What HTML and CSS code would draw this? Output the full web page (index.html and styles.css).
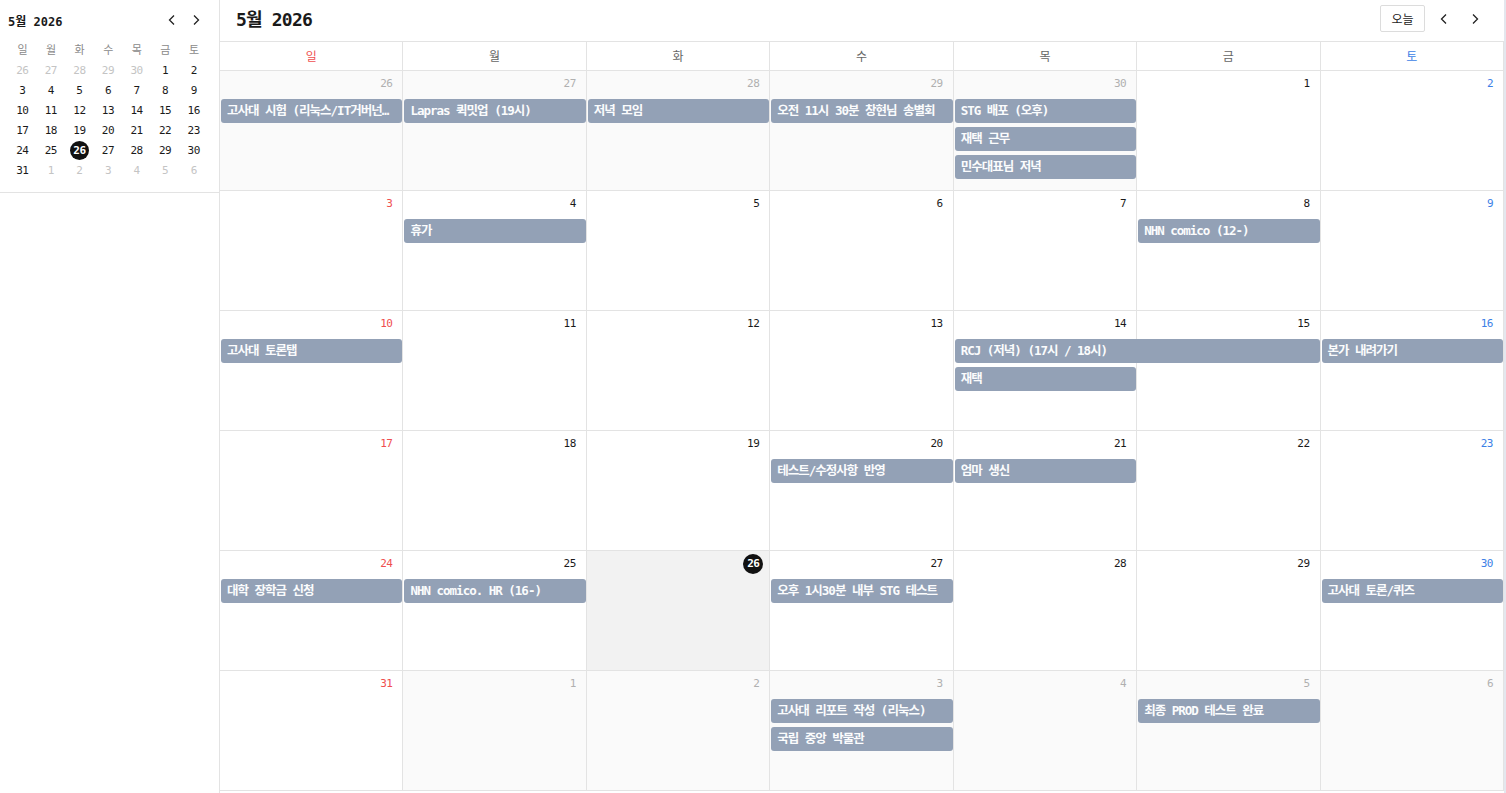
FILE: index.html
```html
<!DOCTYPE html>
<html lang="ko">
<head>
  <meta charset="UTF-8" />
  <meta name="viewport" content="width=device-width, initial-scale=1.0"/>
  <title>캘린더</title>
  <link rel="stylesheet" href="styles.css">
</head>
<body>

<div class="app">

  <!-- 왼쪽: 미니 달력 -->
  <aside class="sidebar">
    <div class="mini">
      <div class="mini-head">
        <span class="mini-title">5월 2026</span>
        <div class="mini-nav">
          <button class="chev"><svg width="8" height="12" viewBox="0 0 8 12"><polyline points="6,1.5 1.5,6 6,10.5"/></svg></button>
          <button class="chev"><svg width="8" height="12" viewBox="0 0 8 12"><polyline points="2,1.5 6.5,6 2,10.5"/></svg></button>
        </div>
      </div>
      <div class="mini-grid">
        <span class="mini-dow">일</span><span class="mini-dow">월</span><span class="mini-dow">화</span><span class="mini-dow">수</span><span class="mini-dow">목</span><span class="mini-dow">금</span><span class="mini-dow">토</span>
        <span class="md out">26</span><span class="md out">27</span><span class="md out">28</span><span class="md out">29</span><span class="md out">30</span><span class="md">1</span><span class="md">2</span>
        <span class="md">3</span><span class="md">4</span><span class="md">5</span><span class="md">6</span><span class="md">7</span><span class="md">8</span><span class="md">9</span>
        <span class="md">10</span><span class="md">11</span><span class="md">12</span><span class="md">13</span><span class="md">14</span><span class="md">15</span><span class="md">16</span>
        <span class="md">17</span><span class="md">18</span><span class="md">19</span><span class="md">20</span><span class="md">21</span><span class="md">22</span><span class="md">23</span>
        <span class="md">24</span><span class="md">25</span><span class="md today"><b>26</b></span><span class="md">27</span><span class="md">28</span><span class="md">29</span><span class="md">30</span>
        <span class="md">31</span><span class="md out">1</span><span class="md out">2</span><span class="md out">3</span><span class="md out">4</span><span class="md out">5</span><span class="md out">6</span>
      </div>
    </div>
  </aside>

  <!-- 오른쪽: 월간 보기 -->
  <main class="main">
    <header class="top">
      <h1 class="title">5월 2026</h1>
      <div class="top-actions">
        <button class="today-btn">오늘</button>
        <button class="chev big"><svg width="8" height="12" viewBox="0 0 8 12"><polyline points="6,1.5 1.5,6 6,10.5"/></svg></button>
        <button class="chev big"><svg width="8" height="12" viewBox="0 0 8 12"><polyline points="2,1.5 6.5,6 2,10.5"/></svg></button>
      </div>
    </header>

    <div class="dow">
      <div class="sun">일</div><div>월</div><div>화</div><div>수</div><div>목</div><div>금</div><div class="sat">토</div>
    </div>

    <div class="weeks">
      <div class="week">
        <div class="cell out"><span class="num">26</span></div>
        <div class="cell out"><span class="num">27</span></div>
        <div class="cell out"><span class="num">28</span></div>
        <div class="cell out"><span class="num">29</span></div>
        <div class="cell out"><span class="num">30</span></div>
        <div class="cell"><span class="num">1</span></div>
        <div class="cell sat"><span class="num">2</span></div>
        <div class="ev c1 r1">고사대 시험 (리눅스/IT거버넌스)</div>
        <div class="ev c2 r1">Lapras 퀵밋업 (19시)</div>
        <div class="ev c3 r1">저녁 모임</div>
        <div class="ev c4 r1">오전 11시 30분 창현님 송별회</div>
        <div class="ev c5 r1">STG 배포 (오후)</div>
        <div class="ev c5 r2">재택 근무</div>
        <div class="ev c5 r3">민수대표님 저녁</div>
      </div>

      <div class="week">
        <div class="cell sun"><span class="num">3</span></div>
        <div class="cell"><span class="num">4</span></div>
        <div class="cell"><span class="num">5</span></div>
        <div class="cell"><span class="num">6</span></div>
        <div class="cell"><span class="num">7</span></div>
        <div class="cell"><span class="num">8</span></div>
        <div class="cell sat"><span class="num">9</span></div>
        <div class="ev c2 r1">휴가</div>
        <div class="ev c6 r1">NHN comico (12-)</div>
      </div>

      <div class="week">
        <div class="cell sun"><span class="num">10</span></div>
        <div class="cell"><span class="num">11</span></div>
        <div class="cell"><span class="num">12</span></div>
        <div class="cell"><span class="num">13</span></div>
        <div class="cell"><span class="num">14</span></div>
        <div class="cell"><span class="num">15</span></div>
        <div class="cell sat"><span class="num">16</span></div>
        <div class="ev c1 r1">고사대 토론탭</div>
        <div class="ev c5 r1 span2">RCJ (저녁) (17시 / 18시)</div>
        <div class="ev c7 r1">본가 내려가기</div>
        <div class="ev c5 r2">재택</div>
      </div>

      <div class="week">
        <div class="cell sun"><span class="num">17</span></div>
        <div class="cell"><span class="num">18</span></div>
        <div class="cell"><span class="num">19</span></div>
        <div class="cell"><span class="num">20</span></div>
        <div class="cell"><span class="num">21</span></div>
        <div class="cell"><span class="num">22</span></div>
        <div class="cell sat"><span class="num">23</span></div>
        <div class="ev c4 r1">테스트/수정사항 반영</div>
        <div class="ev c5 r1">엄마 생신</div>
      </div>

      <div class="week">
        <div class="cell sun"><span class="num">24</span></div>
        <div class="cell"><span class="num">25</span></div>
        <div class="cell is-today"><span class="num">26</span></div>
        <div class="cell"><span class="num">27</span></div>
        <div class="cell"><span class="num">28</span></div>
        <div class="cell"><span class="num">29</span></div>
        <div class="cell sat"><span class="num">30</span></div>
        <div class="ev c1 r1">대학 장학금 신청</div>
        <div class="ev c2 r1">NHN comico. HR (16-)</div>
        <div class="ev c4 r1">오후 1시30분 내부 STG 테스트</div>
        <div class="ev c7 r1">고사대 토론/퀴즈</div>
      </div>

      <div class="week">
        <div class="cell sun"><span class="num">31</span></div>
        <div class="cell out"><span class="num">1</span></div>
        <div class="cell out"><span class="num">2</span></div>
        <div class="cell out"><span class="num">3</span></div>
        <div class="cell out"><span class="num">4</span></div>
        <div class="cell out"><span class="num">5</span></div>
        <div class="cell out"><span class="num">6</span></div>
        <div class="ev c4 r1">고사대 리포트 작성 (리눅스)</div>
        <div class="ev c4 r2">국립 중앙 박물관</div>
        <div class="ev c6 r1">최종 PROD 테스트 완료</div>
      </div>
    </div>
  </main>

</div>

</body>
</html>
```

FILE: styles.css
```css
:root {
  --line: #e3e3e3;
  --event: #93a1b6;
  --sun: #ef4f4f;
  --sat: #3d7fe6;
  --muted: #b0b0b0;
}

* {
  margin: 0;
  padding: 0;
  box-sizing: border-box;
}

body {
  font-family: "DejaVu Sans Mono", "Noto Sans CJK KR", monospace;
  color: #1a1a1a;
  background: #fff;
}

button {
  font-family: inherit;
  background: none;
  border: none;
  cursor: pointer;
  color: #222;
}

.app {
  display: flex;
  height: 793px;
}

/* sidebar / mini calendar */
.sidebar {
  width: 220px;
  flex-shrink: 0;
  border-right: 1px solid var(--line);
}

.mini {
  padding: 8px 11px 12px 8px;
  border-bottom: 1px solid var(--line);
}

.mini-head {
  display: flex;
  align-items: center;
  justify-content: space-between;
  height: 24px;
}

.mini-title {
  font-size: 12px;
  font-weight: bold;
}

.mini-nav {
  display: flex;
  gap: 4px;
  margin-right: 2px;
}

.chev {
  width: 20px;
  height: 24px;
  display: flex;
  align-items: center;
  justify-content: center;
}

.chev svg polyline {
  fill: none;
  stroke: #222;
  stroke-width: 1.3;
}

.mini-grid {
  display: grid;
  grid-template-columns: repeat(7, 1fr);
  grid-template-rows: 21px;
  grid-auto-rows: 20px;
  margin-top: 7px;
  width: 200px;
  font-size: 11px;
  letter-spacing: -0.5px;
}

.mini-grid span {
  display: flex;
  align-items: center;
  justify-content: center;
}

.mini-dow {
  color: #8a8a8a;
  padding-bottom: 1px;
}

.md.out {
  color: #c4c4c4;
}

.md.today b {
  width: 19px;
  height: 19px;
  border-radius: 50%;
  background: #111;
  color: #fff;
  display: flex;
  align-items: center;
  justify-content: center;
}

/* month view */
.main {
  width: 1286px;
  display: flex;
  flex-direction: column;
  border-right: 2px solid #e4e7ee;
}

.top {
  height: 42px;
  display: flex;
  align-items: center;
  justify-content: space-between;
  padding: 0 17px 0 16px;
  border-bottom: 1px solid var(--line);
}

.title {
  font-size: 18px;
  letter-spacing: -0.8px;
  font-weight: bold;
  margin-top: -5px;
}

.top-actions {
  display: flex;
  align-items: center;
  gap: 7px;
  margin-top: -4px;
}

.today-btn {
  width: 45px;
  height: 27px;
  border: 1px solid #dcdcdc;
  border-radius: 2px;
  font-size: 12px;
}

.chev.big {
  width: 24px;
}

.dow {
  display: grid;
  grid-template-columns: repeat(7, minmax(0, 1fr));
  height: 29px;
  border-bottom: 1px solid var(--line);
  font-size: 12px;
  color: #666;
}

.dow div {
  display: flex;
  align-items: center;
  justify-content: center;
  border-right: 1px solid var(--line);
  padding-bottom: 2px;
}

.dow .sun { color: var(--sun); }
.dow .sat { color: var(--sat); }

.weeks {
  display: flex;
  flex-direction: column;
}

.week {
  height: 120px;
  display: grid;
  grid-template-columns: repeat(7, minmax(0, 1fr));
  grid-template-rows: 24px repeat(3, 24px) 1fr;
  row-gap: 4px;
  border-bottom: 1px solid var(--line);
}

.cell {
  grid-row: 1 / -1;
  border-right: 1px solid var(--line);
  display: flex;
  justify-content: flex-end;
  align-items: flex-start;
  padding: 6px 10px 0 0;
  font-size: 11px;
  letter-spacing: -0.5px;
}

.cell:nth-child(1) { grid-column: 1; }
.cell:nth-child(2) { grid-column: 2; }
.cell:nth-child(3) { grid-column: 3; }
.cell:nth-child(4) { grid-column: 4; }
.cell:nth-child(5) { grid-column: 5; }
.cell:nth-child(6) { grid-column: 6; }
.cell:nth-child(7) { grid-column: 7; }

.num {
  height: 14px;
  line-height: 14px;
}

.cell.out { background: #fafafa; }
.cell.out .num { color: var(--muted); }
.cell.sun .num { color: var(--sun); }
.cell.sat .num { color: var(--sat); }

.cell.is-today { background: #f2f2f2; }

.cell.is-today .num {
  width: 20px;
  height: 20px;
  margin: -3px -4px 0 0;
  border-radius: 50%;
  background: #111;
  color: #fff;
  font-weight: bold;
  display: flex;
  align-items: center;
  justify-content: center;
}

/* event bars */
.ev {
  margin: 0 1px;
  height: 24px;
  line-height: 24px;
  padding: 0 6px;
  border-radius: 3px;
  background: var(--event);
  color: #fbfcfd;
  font-size: 12.5px;
  font-weight: bold;
  letter-spacing: -1px;
  white-space: nowrap;
  overflow: hidden;
  text-overflow: ellipsis;
}

.r1 { grid-row: 2; }
.r2 { grid-row: 3; }
.r3 { grid-row: 4; }

.c1 { grid-column: 1; }
.c2 { grid-column: 2; }
.c3 { grid-column: 3; }
.c4 { grid-column: 4; }
.c5 { grid-column: 5; }
.c6 { grid-column: 6; }
.c7 { grid-column: 7; }

.c5.span2 { grid-column: 5 / span 2; }
```
